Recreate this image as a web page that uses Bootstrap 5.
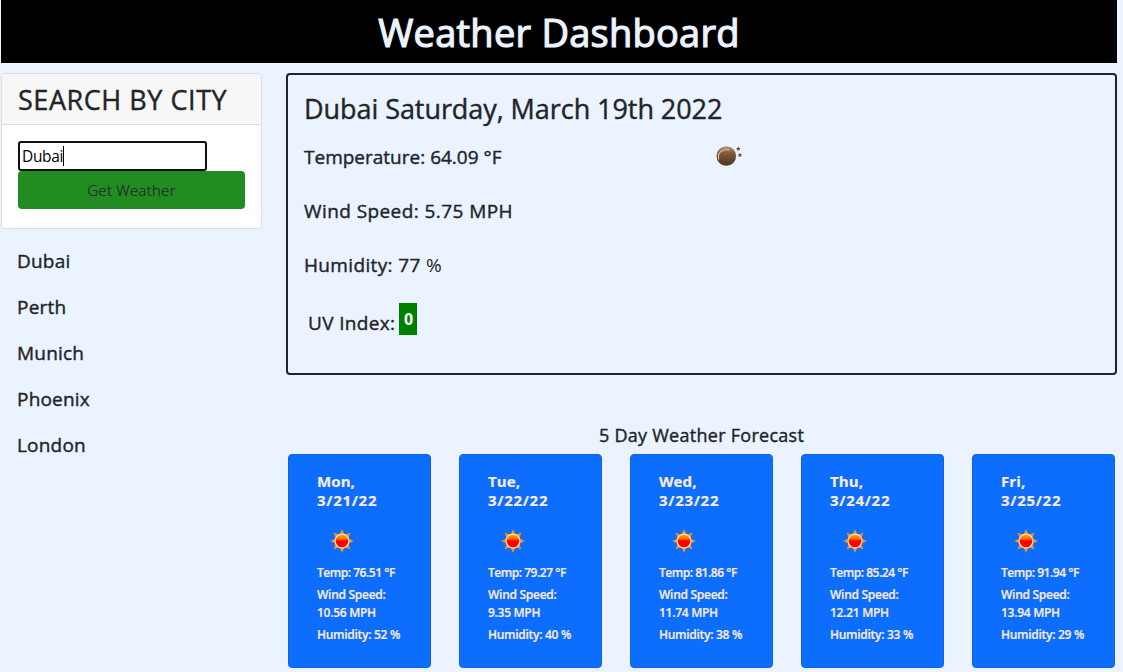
<!DOCTYPE html>
<html lang="en">
<head>
<meta charset="utf-8">
<meta name="viewport" content="width=device-width, initial-scale=1">
<title>Weather Dashboard</title>
<link href="https://cdn.jsdelivr.net/npm/bootstrap@5.3.0/dist/css/bootstrap.min.css" rel="stylesheet">
<style>
  body { background: #ebf3ff; color: #212529; font-family: "Open Sans", "Noto Sans", sans-serif; overflow: hidden; }
  h1, h3, h5 { -webkit-text-stroke: .4px currentColor; }
  .page { margin: 0 6px 0 1px; }
  .topbar { background: #000; color: #ebf3ff; height: 63px; margin-bottom: 10px; }
  .topbar h1 { font-size: 38px; line-height: 48px; padding-top: 8px; letter-spacing: .25px; -webkit-text-stroke-width: 1.2px; }
  .search-card { height: 156px; border-color: #dfdfdf; border-radius: 4px; }
  .search-card .card-header { height: 51px; padding: 8px 16px; background: #f7f7f7; border-color: #d9d9d9; }
  .search-card h3 { font-size: 27px; line-height: 36px; letter-spacing: .55px; }
  .city-input { width: 189px; height: 30px; border: 2px solid #101010; border-radius: 3px; padding: 0 2px; background: #fff; color: #000; line-height: 26px; }
  .city-input span:first-child { font-size: 15.5px; letter-spacing: -.35px; }
  .caret { width: 1px; height: 20px; background: #000; }
  .btn-weather, .btn-weather:hover { background: #228b22; color: #212529; height: 38px; font-size: 15px; border: 0; border-radius: 4px; font-weight: 300; letter-spacing: .27px; -webkit-text-stroke: .2px currentColor; }
  .city-list h5 { font-size: 19px; line-height: 24px; margin-bottom: 22px; letter-spacing: .2px; }
  .current { height: 302px; border: 2px solid #212529; border-radius: 4px; padding: 17px 16px; }
  .current h3 { font-size: 27px; line-height: 34px; margin-bottom: 19px; letter-spacing: -.06px; }
  .current h5 { font-size: 19px; line-height: 24px; margin-bottom: 30px; }
  .current .wind { letter-spacing: .42px; }
  .current .humidity { letter-spacing: .35px; }
  .humidity span { -webkit-text-stroke: 0; }
  .current .uv-label { letter-spacing: .35px; }
  .uv-row { margin-top: -4px; }
  .uv { background: green; color: #fff; width: 18px; height: 32px; font-size: 16px; line-height: 33px; }
  .moon { margin-top: -2px; }
  .forecast-title { font-size: 18px; line-height: 22px; margin: 49px 0 8px; letter-spacing: .27px; }
  .days { padding: 0 2px; }
  .day { width: 143px; height: 214px; background: #0d6efd; border: 1px solid #0c63e4; border-radius: 4px; color: #faebd7; padding: 17px 28px; }
  .day h6 { font-size: 15px; line-height: 19px; font-weight: 700; margin-bottom: 19px; letter-spacing: .1px; -webkit-text-stroke: .2px currentColor; }
  .day h6 span { letter-spacing: .7px; }
  .day p { font-size: 12px; line-height: 18px; font-weight: 600; margin-bottom: 4px; white-space: nowrap; letter-spacing: -.28px; -webkit-text-stroke: .2px currentColor; }
  .day p.temp { letter-spacing: -.47px; }
  .sun { display: block; margin: 0 0 11px 13px; }
</style>
</head>
<body>
<svg class="position-absolute" width="0" height="0">
  <defs>
    <linearGradient id="sunFill" x1="0" y1="0" x2="0" y2="1">
      <stop offset="0" stop-color="#ffb000"/><stop offset=".35" stop-color="#ff6a00"/><stop offset=".5" stop-color="#ff0000"/><stop offset="1" stop-color="#ff0000"/>
    </linearGradient>
    <linearGradient id="moonFill" x1="0" y1="0" x2="0" y2="1">
      <stop offset="0" stop-color="#c09470"/><stop offset=".35" stop-color="#805a3d"/><stop offset="1" stop-color="#50321c"/>
    </linearGradient>
  </defs>
</svg>
<div class="page">
  <header class="topbar text-center"><h1>Weather Dashboard</h1></header>
  <div class="row">
    <aside class="col-3">
      <div class="card search-card">
        <div class="card-header"><h3 class="m-0 text-nowrap">SEARCH BY CITY</h3></div>
        <div class="card-body">
          <div class="city-input d-flex align-items-center"><span>Dubai</span><span class="caret"></span></div>
          <button class="btn btn-weather w-100 d-block" type="button">Get Weather</button>
        </div>
      </div>
      <div class="city-list px-3 pt-3 mt-1">
        <h5>Dubai</h5><h5>Perth</h5><h5>Munich</h5><h5>Phoenix</h5><h5>London</h5>
      </div>
    </aside>
    <main class="col-9">
      <section class="current">
        <h3>Dubai Saturday, March 19th 2022</h3>
        <div class="row g-0">
          <div class="col-6">
            <h5>Temperature: 64.09 °F</h5>
            <h5 class="wind">Wind Speed: 5.75 MPH</h5>
            <h5 class="humidity">Humidity: 77 <span>%</span></h5>
            <div class="d-flex uv-row ps-1"><h5 class="uv-label pt-2 mb-0 me-1">UV Index:</h5><span class="uv text-center fw-bold">0</span></div>
          </div>
          <div class="col-6">
            <svg class="moon d-block" width="50" height="30" viewBox="0 0 50 30">
              <circle cx="24.300" cy="13" r="9.8" fill="url(#moonFill)"/>
              <path d="M16.800 16.500C15 10 19.500 6 27 6.600" fill="none" stroke="#e2c5af" stroke-width="1.100"/>
              <path d="M36.300 3.600l.7 1.400 1.600.2-1.200 1.100.3 1.600-1.400-.8-1.400.8.3-1.600-1.200-1.100 1.600-.2zM37.900 9.800l.7 1.400 1.600.2-1.200 1.100.3 1.600-1.400-.8-1.400.8.3-1.600-1.200-1.100 1.600-.2z" fill="#704b32"/>
            </svg>
          </div>
        </div>
      </section>
      <h5 class="forecast-title text-center">5 Day Weather Forecast</h5>
      <div class="d-flex justify-content-between days" id="days"></div>
    </main>
  </div>
</div>
<script src="https://cdn.jsdelivr.net/npm/bootstrap@5.3.0/dist/js/bootstrap.bundle.min.js"></script>
<script>
  const forecast = [
    ['Mon', '3/21/22', '76.51', '10.56', 52],
    ['Tue', '3/22/22', '79.27', '9.35', 40],
    ['Wed', '3/23/22', '81.86', '11.74', 38],
    ['Thu', '3/24/22', '85.24', '12.21', 33],
    ['Fri', '3/25/22', '91.94', '13.94', 29]
  ];
  const rays = Array.from({length: 8}, (_, i) =>
    `<path d="M12 .2L15.200 7H8.800z" fill="#f6931d" transform="rotate(${i * 45} 12 12)"/>`).join('');
  document.getElementById('days').innerHTML = forecast.map(([day, date, temp, wind, hum]) => `
    <article class="day">
      <h6>${day},<br><span>${date}</span></h6>
      <svg class="sun" width="24" height="24" viewBox="0 0 24 24">${rays}
        <circle cx="12" cy="12" r="6.900" fill="url(#sunFill)" stroke="#ffe3b0" stroke-width="1.200"/></svg>
      <p class="temp">Temp: ${temp} °F</p>
      <p>Wind Speed:<br>${wind} MPH</p>
      <p>Humidity: ${hum} %</p>
    </article>`).join('');
</script>
</body>
</html>
